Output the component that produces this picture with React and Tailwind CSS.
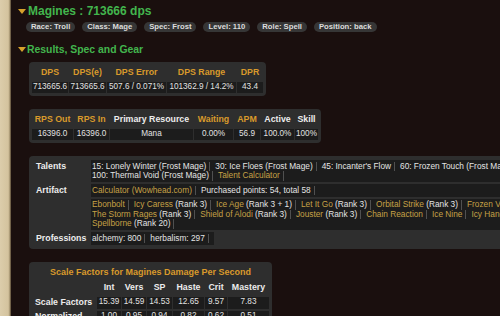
import React from "react";

const GOLD = "text-[#c6a146]";

function Item({ children }) {
  return (
    <span className="inline-block border-r border-[#505050] pr-[3px] mr-[5px] whitespace-nowrap">
      {children}
    </span>
  );
}

function G({ children }) {
  return <span className={GOLD}>{children}</span>;
}

function Badge({ children }) {
  return (
    <span className="h-[10px] rounded-full bg-[#363636] px-[5px] text-[7.7px] font-bold leading-[10px] text-[#dcdcdc] whitespace-nowrap">
      {children}
    </span>
  );
}

function Tri() {
  return (
    <span className="inline-block h-0 w-0 border-l-[4px] border-r-[4px] border-t-[5px] border-l-transparent border-r-transparent border-t-[#d6a22c]" />
  );
}

export default function App() {
  const h1 = "h-[16px] flex items-center justify-center text-[8.8px] font-bold whitespace-nowrap";
  const v1 = "h-[11px] bg-[#1c1c1c] flex items-center justify-center text-[8.2px] text-[#e2e2e2] whitespace-nowrap";
  const lab = "pl-[4px] py-[1.5px] text-[8.8px] leading-[9.5px] font-bold text-[#ececec] whitespace-nowrap";
  const val = "bg-[#1c1c1c] pl-[1px] py-[1.5px] text-[8.3px] leading-[9.5px] text-[#e4e4e4]";
  const sh = "h-[14px] flex items-center justify-center text-[8.8px] font-bold text-[#ececec]";
  const sv = "h-[12px] bg-[#1c1c1c] flex items-center justify-center text-[8.2px] text-[#e2e2e2]";
  const sl = "h-[12px] flex items-center pl-[3px] text-[8.8px] font-bold text-[#ececec] whitespace-nowrap";

  return (
    <div className="flex h-[316px] w-[500px] overflow-hidden bg-[#1a0f0e] font-['Liberation_Sans',Arial,sans-serif]">
      <div className="w-[11px] shrink-0 bg-[linear-gradient(90deg,#dccdab,#d4c39e_75%,#9c8b68_92%,#3a2c22)]" />
      <div className="min-w-0 flex-1 pl-[7px]">
        {/* Title */}
        <div className="flex items-center pt-[4px] h-[18px]">
          <Tri />
          <span className="ml-[2px] text-[12px] font-bold leading-[14px] text-[#42b54d] whitespace-nowrap">
            Magines : 713666 dps
          </span>
        </div>
        {/* Badges */}
        <div className="ml-[8px] mt-[4px] flex gap-[7px]">
          <Badge>Race: Troll</Badge>
          <Badge>Class: Mage</Badge>
          <Badge>Spec: Frost</Badge>
          <Badge>Level: 110</Badge>
          <Badge>Role: Spell</Badge>
          <Badge>Position: back</Badge>
        </div>
        {/* Results header */}
        <div className="mt-[11px] flex h-[13px] items-center">
          <Tri />
          <span className="ml-[1px] text-[10.4px] font-bold leading-[13px] text-[#42b54d] whitespace-nowrap">
            Results, Spec and Gear
          </span>
        </div>

        {/* Panel 1 */}
        <div className="ml-[11px] mt-[6px] w-fit rounded-[4px] bg-[#2e2e2e] p-[3px]">
          <div className="grid grid-cols-[36px_37px_59px_69px_26px] gap-px">
            <div className={h1 + " text-[#d99a2b]"}>DPS</div>
            <div className={h1 + " text-[#d99a2b]"}>DPS(e)</div>
            <div className={h1 + " text-[#d99a2b]"}>DPS Error</div>
            <div className={h1 + " text-[#d99a2b]"}>DPS Range</div>
            <div className={h1 + " text-[#d99a2b]"}>DPR</div>
            <div className={v1}>713665.6</div>
            <div className={v1}>713665.6</div>
            <div className={v1}>507.6 / 0.071%</div>
            <div className={v1}>101362.9 / 14.2%</div>
            <div className={v1}>43.4</div>
          </div>
        </div>

        {/* Panel 2 */}
        <div className="ml-[11px] mt-[13px] w-fit rounded-[4px] bg-[#2e2e2e] p-[3px]">
          <div className="grid grid-cols-[41px_35px_83px_39px_26px_33px_23px] gap-px">
            <div className={h1 + " text-[#d99a2b]"}>RPS Out</div>
            <div className={h1 + " text-[#d99a2b]"}>RPS In</div>
            <div className={h1 + " text-[#ececec]"}>Primary Resource</div>
            <div className={h1 + " text-[#d99a2b]"}>Waiting</div>
            <div className={h1 + " text-[#d99a2b]"}>APM</div>
            <div className={h1 + " text-[#ececec]"}>Active</div>
            <div className={h1 + " text-[#ececec]"}>Skill</div>
            <div className={v1}>16396.0</div>
            <div className={v1}>16396.0</div>
            <div className={v1}>Mana</div>
            <div className={v1}>0.00%</div>
            <div className={v1}>56.9</div>
            <div className={v1}>100.0%</div>
            <div className={v1}>100%</div>
          </div>
        </div>

        {/* Panel 3 */}
        <div className="ml-[11px] mt-[13px] w-[560px] rounded-[4px] bg-[#2e2e2e] px-[3px] pt-[4px] pb-[4px]">
          <div className="grid grid-cols-[58px_1fr] gap-x-px gap-y-[2px]">
            <div className={lab}>Talents</div>
            <div className={val}>
              <div className="whitespace-nowrap">
                <Item>15: Lonely Winter (Frost Mage)</Item>
                <Item>30: Ice Floes (Frost Mage)</Item>
                <Item>45: Incanter's Flow</Item>
                <Item>60: Frozen Touch (Frost Mage)</Item>
                <Item>75: Ring of Frost</Item>
              </div>
              <div className="whitespace-nowrap">
                <Item>100: Thermal Void (Frost Mage)</Item>
                <Item><G>Talent Calculator</G></Item>
              </div>
            </div>
            <div className={lab + " row-span-2"}>Artifact</div>
            <div className={val}>
              <div className="whitespace-nowrap">
                <Item><G>Calculator (Wowhead.com)</G></Item>
                <Item>Purchased points: 54, total 58</Item>
              </div>
            </div>
            <div className={val}>
              <div className="whitespace-nowrap">
                <Item><G>Ebonbolt</G></Item>
                <Item><G>Icy Caress</G> (Rank 3)</Item>
                <Item><G>Ice Age</G> (Rank 3 + 1)</Item>
                <Item><G>Let It Go</G> (Rank 3)</Item>
                <Item><G>Orbital Strike</G> (Rank 3)</Item>
                <Item><G>Frozen Veins</G> (Rank 3)</Item>
              </div>
              <div className="whitespace-nowrap">
                <Item><G>The Storm Rages</G> (Rank 3)</Item>
                <Item><G>Shield of Alodi</G> (Rank 3)</Item>
                <Item><G>Jouster</G> (Rank 3)</Item>
                <Item><G>Chain Reaction</G></Item>
                <Item><G>Ice Nine</G></Item>
                <Item><G>Icy Hand</G> (Rank 3)</Item>
              </div>
              <div className="whitespace-nowrap">
                <Item><G>Spellborne</G> (Rank 20)</Item>
              </div>
            </div>
            <div className={lab}>Professions</div>
            <div className="text-[8.3px] leading-[9.5px] text-[#e4e4e4]">
              <div className="inline-flex bg-[#1c1c1c] pl-[1px] py-[1.5px] whitespace-nowrap">
                <Item>alchemy: 800</Item>
                <Item>herbalism: 297</Item>
              </div>
            </div>
          </div>
        </div>

        {/* Panel 4 */}
        <div className="ml-[11px] mt-[13px] w-fit rounded-[4px] bg-[#2e2e2e] px-[3px] pt-[4px] pb-[4px]">
          <div className="h-[13px] text-center text-[9px] font-bold leading-[13px] text-[#d99a2b] whitespace-nowrap">
            Scale Factors for Magines Damage Per Second
          </div>
          <div className="mt-[2px] grid grid-cols-[64px_24px_24px_25px_31px_22px_41px] gap-x-px gap-y-[2px]">
            <div className="h-[14px]" />
            <div className={sh}>Int</div>
            <div className={sh}>Vers</div>
            <div className={sh}>SP</div>
            <div className={sh}>Haste</div>
            <div className={sh}>Crit</div>
            <div className={sh}>Mastery</div>
            <div className={sl}>Scale Factors</div>
            <div className={sv}>15.39</div>
            <div className={sv}>14.59</div>
            <div className={sv}>14.53</div>
            <div className={sv}>12.65</div>
            <div className={sv}>9.57</div>
            <div className={sv}>7.83</div>
            <div className={sl}>Normalized</div>
            <div className={sv}>1.00</div>
            <div className={sv}>0.95</div>
            <div className={sv}>0.94</div>
            <div className={sv}>0.82</div>
            <div className={sv}>0.62</div>
            <div className={sv}>0.51</div>
          </div>
        </div>
      </div>
    </div>
  );
}
